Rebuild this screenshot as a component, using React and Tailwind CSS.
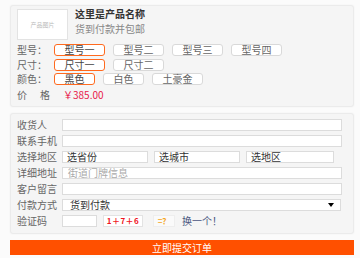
import React from 'react';

const Opt = ({ label, active, w }) => (
  <div
    className={`h-[12px] ${w} flex items-center justify-center rounded-[3px] border text-[10px] leading-none ${
      active ? 'border-[#ff6a1f] bg-[#fff] text-[#444]' : 'border-[#d9d9d9] bg-[#fff] text-[#666]'
    }`}
  >
    {label}
  </div>
);

const OptRow = ({ label, children }) => (
  <div className="flex items-center h-[12px]">
    <div className="w-[37px] text-[10px] leading-none text-[#666]">{label}</div>
    <div className="flex gap-[8px]">{children}</div>
  </div>
);

const Field = ({ label, children }) => (
  <div className="flex items-center h-[12px]">
    <div className="w-[45px] text-[10px] leading-none text-[#666] whitespace-nowrap">{label}</div>
    {children}
  </div>
);

const Box = ({ className = '', children }) => (
  <div className={`h-[12px] border border-[#dcdcdc] bg-white flex items-center text-[10px] leading-none ${className}`}>
    {children}
  </div>
);

const App = () => {
  return (
    <div className="w-[360px] h-[258px] bg-[#fbfbfb] pt-[5px] font-['Noto_Sans_CJK_SC','Noto_Sans',sans-serif] overflow-hidden">
      {/* product card */}
      <div className="ml-[10px] w-[344px] h-[102px] bg-[#f5f5f5] border border-[#ebebeb] rounded-[3px] shadow-[0_0_2px_rgba(0,0,0,0.06)] pl-[6px] pt-[3px]">
        <div className="flex">
          <div className="w-[51px] h-[31px] bg-white border border-[#e3e3e3] flex items-center justify-center text-[6px] text-[#bbb]">
            产品图片
          </div>
          <div className="ml-[7px] flex flex-col">
            <div className="h-[10px] text-[10px] font-bold text-[#333] leading-[10px]">这里是产品名称</div>
            <div className="mt-[5px] h-[10px] text-[10px] text-[#888] leading-[10px]">货到付款并包邮</div>
          </div>
        </div>
        <div className="mt-[4px] flex flex-col gap-[2.5px]">
          <OptRow label="型号：">
            <Opt label="型号一" active w="w-[51px]" />
            <Opt label="型号二" w="w-[51px]" />
            <Opt label="型号三" w="w-[51px]" />
            <Opt label="型号四" w="w-[51px]" />
          </OptRow>
          <OptRow label="尺寸：">
            <Opt label="尺寸一" active w="w-[51px]" />
            <Opt label="尺寸二" w="w-[51px]" />
          </OptRow>
          <OptRow label="颜色：">
            <Opt label="黑色" active w="w-[41px]" />
            <Opt label="白色" w="w-[41px]" />
            <Opt label="土豪金" w="w-[51px]" />
          </OptRow>
        </div>
        <div className="mt-[4px] flex items-center h-[12px] text-[10px] leading-none">
          <div className="w-[46px] flex text-[#666]">
            <span>价</span>
            <span className="ml-[13px]">格</span>
          </div>
          <span className="text-[#e8194a]">￥385.00</span>
        </div>
      </div>

      {/* form card */}
      <div className="mt-[6px] ml-[10px] w-[344px] h-[121px] bg-[#f5f5f5] border border-[#ebebeb] rounded-[3px] shadow-[0_0_2px_rgba(0,0,0,0.06)] pl-[6px] pt-[5px] flex flex-col gap-[4px]">
        <Field label="收货人">
          <Box className="w-[280px]" />
        </Field>
        <Field label="联系手机">
          <Box className="w-[280px]" />
        </Field>
        <Field label="选择地区">
          <div className="flex gap-[6px]">
            <Box className="w-[86px] pl-[4px] text-[#333]">选省份</Box>
            <Box className="w-[86px] pl-[4px] text-[#333]">选城市</Box>
            <Box className="w-[88px] pl-[4px] text-[#333]">选地区</Box>
          </div>
        </Field>
        <Field label="详细地址">
          <Box className="w-[280px] pl-[5px] text-[#aaa]">街道门牌信息</Box>
        </Field>
        <Field label="客户留言">
          <Box className="w-[280px]" />
        </Field>
        <Field label="付款方式">
          <Box className="w-[279px] pl-[7px] pr-[6px] justify-between text-[#333]">
            <span>货到付款</span>
            <span className="w-0 h-0 border-l-[3px] border-r-[3px] border-t-[4px] border-l-transparent border-r-transparent border-t-black" />
          </Box>
        </Field>
        <Field label="验证码">
          <Box className="w-[35px]" />
          <div className="ml-[6px] w-[40px] h-[12px] border border-[#e3e3e3] bg-white flex items-center justify-center text-[8px] font-bold text-[#f0141e] leading-none tracking-[0.5px]">
            1＋7＋6
          </div>
          <div className="ml-[10px] w-[22px] h-[12px] border border-[#eee] bg-[#fafafa] flex items-center justify-center text-[8px] font-bold text-[#f5a623] leading-none">
            =？
          </div>
          <span className="ml-[7px] text-[10px] leading-none text-[#4a5580]">换一个！</span>
        </Field>
      </div>

      <div className="mt-[6px] ml-[10px] w-[344px] h-[15px] bg-[#ff5000] flex items-center justify-center text-white text-[10px] leading-none">
        立即提交订单
      </div>
    </div>
  );
};

export default App;
